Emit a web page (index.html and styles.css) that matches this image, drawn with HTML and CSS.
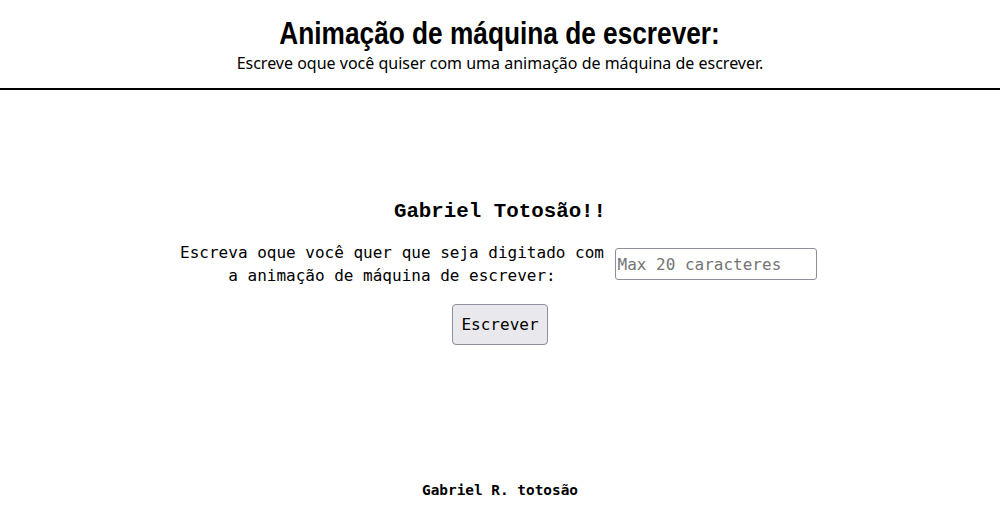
FILE: index.html
```html
<!DOCTYPE html>
<html lang="pt-BR">
<head>
<meta charset="utf-8">
<title>Animação de máquina de escrever</title>
<link rel="stylesheet" href="styles.css">
</head>
<body>
<header class="header">
  <h1 class="title">Animação de máquina de escrever:</h1>
  <p class="subtitle">Escreve oque você quiser com uma animação de máquina de escrever.</p>
</header>
<main class="main">
  <h2 class="typed">Gabriel Totosão!!</h2>
  <div class="form-row">
    <label class="label" for="texto">Escreva oque você quer que seja digitado com a animação de máquina de escrever:</label>
    <input class="input" id="texto" type="text" maxlength="20" placeholder="Max 20 caracteres">
  </div>
  <button class="button" type="button">Escrever</button>
</main>
<footer class="footer">Gabriel R. totosão</footer>
</body>
</html>
```
FILE: styles.css
```css
html, body {
  margin: 0;
  padding: 0;
  background: #fff;
  color: #000;
}
body {
  height: 521px;
  display: flex;
  flex-direction: column;
  font-family: "DejaVu Sans Mono", monospace;
}
.header {
  display: flex;
  flex-direction: column;
  align-items: center;
  padding-top: 14px;
  border-bottom: 2px solid #000;
  height: 74px;
  box-sizing: content-box;
}
.title {
  margin: 0;
  font-family: "Liberation Sans", sans-serif;
  font-weight: 700;
  font-size: 32px;
  line-height: 38px;
  transform: scaleX(0.82);
  white-space: nowrap;
}
.subtitle {
  margin: 0;
  font-family: "Noto Sans", "Open Sans", sans-serif;
  font-size: 16px;
  line-height: 22px;
}
.main {
  display: flex;
  flex-direction: column;
  align-items: center;
  padding-top: 110px;
  flex: 1;
}
.typed {
  margin: 0;
  font-family: "Liberation Mono", monospace;
  font-weight: 700;
  font-size: 20.8px;
  line-height: 24px;
}
.form-row {
  display: flex;
  align-items: center;
  gap: 10px;
  margin-top: 17px;
  margin-right: 4px;
}
.label {
  width: 425px;
  text-align: center;
  font-size: 16px;
  line-height: 23px;
}
.input {
  width: 202px;
  height: 32px;
  box-sizing: border-box;
  border: 1px solid #8f8f9d;
  border-radius: 3px;
  padding: 0 2px;
  font-family: "DejaVu Sans Mono", monospace;
  font-size: 16px;
}
.input::placeholder {
  color: #757575;
}
.button {
  margin-top: 17px;
  width: 96px;
  height: 41px;
  background: #e9e9ed;
  border: 1px solid #8f8f9d;
  border-radius: 4px;
  font-family: "DejaVu Sans Mono", monospace;
  font-size: 16px;
  color: #000;
  padding: 0;
}
.footer {
  text-align: center;
  font-weight: 700;
  font-size: 14.4px;
  line-height: 18px;
  padding-bottom: 22px;
}
```
